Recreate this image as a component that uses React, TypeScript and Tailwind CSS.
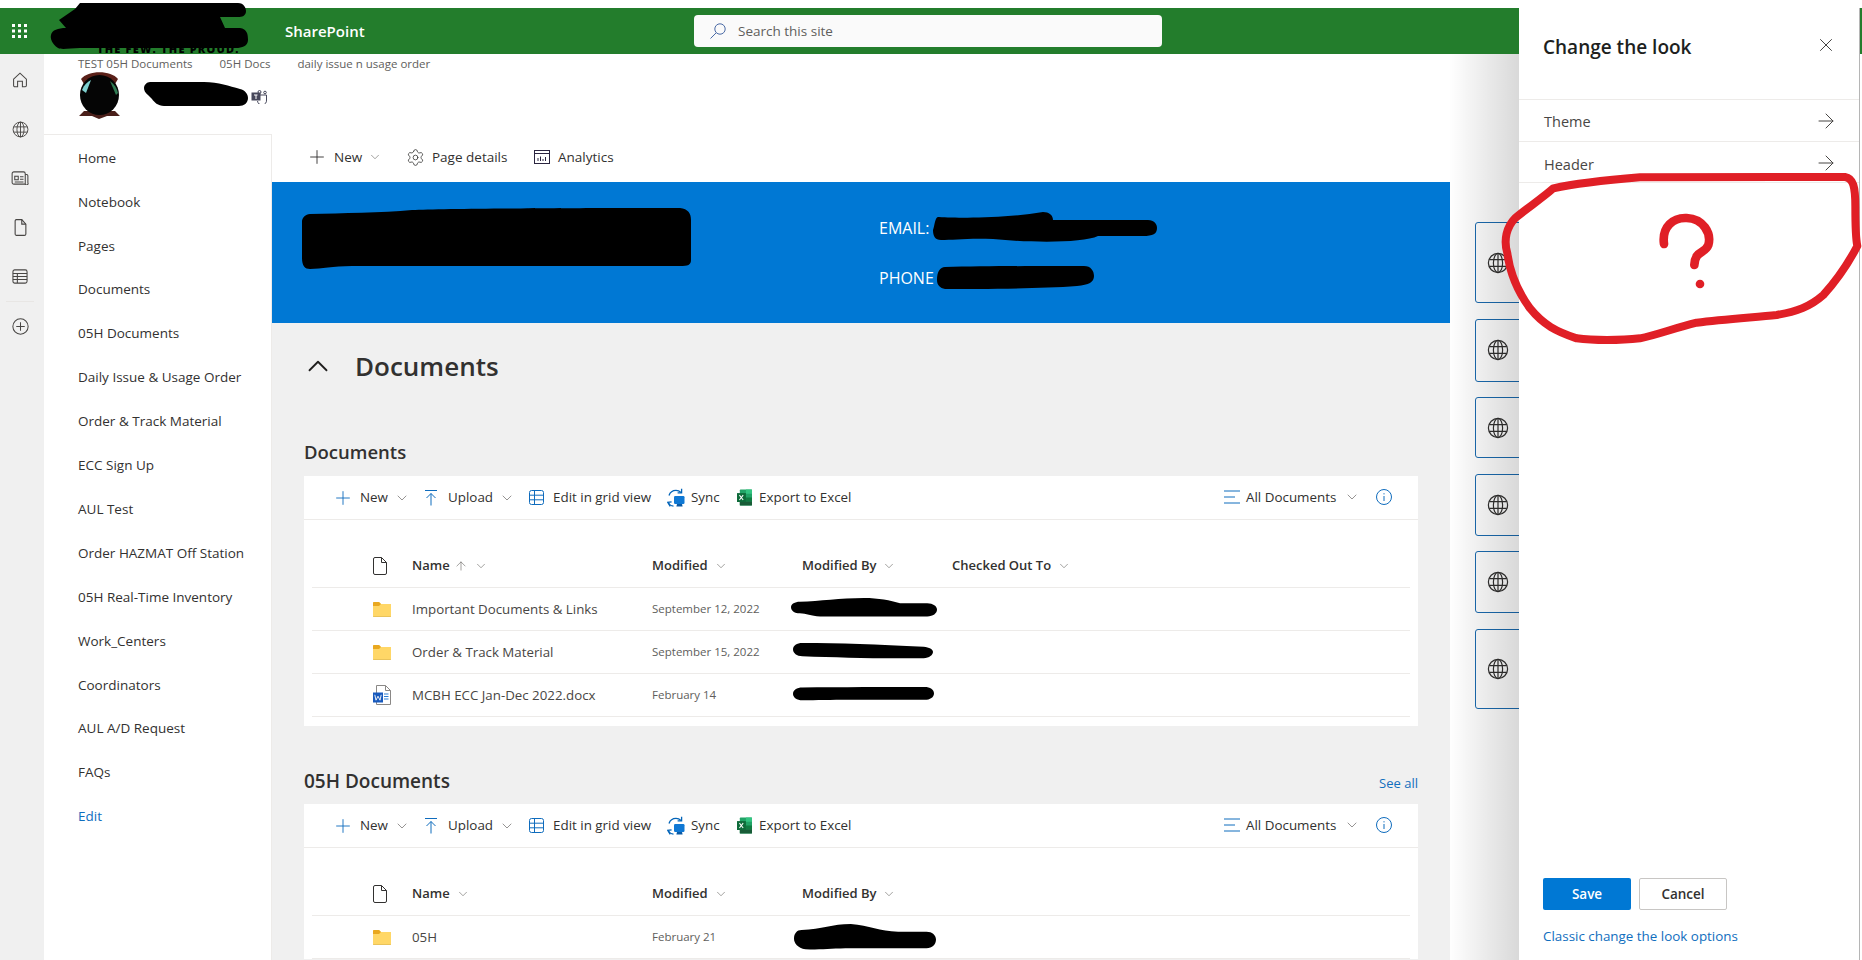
import { ArrowRight, ArrowUp, ChevronDown, ChevronUp, Plus, Settings, X } from "lucide-react";

const navItems = [
  "Home",
  "Notebook",
  "Pages",
  "Documents",
  "05H Documents",
  "Daily Issue & Usage Order",
  "Order & Track Material",
  "ECC Sign Up",
  "AUL Test",
  "Order HAZMAT Off Station",
  "05H Real-Time Inventory",
  "Work_Centers",
  "Coordinators",
  "AUL A/D Request",
  "FAQs",
];

const cardHeights = ["h-[81px]", "h-[63px]", "h-[61px]", "h-[62px]", "h-[62px]", "h-[80px]"];

function Globe({ className }: { className?: string }) {
  return (
    <svg viewBox="0 0 22 22" fill="none" stroke="currentColor" strokeWidth="1.2" className={className}>
      <circle cx="11" cy="11" r="9.6" />
      <ellipse cx="11" cy="11" rx="4.6" ry="9.6" />
      <path d="M11 1.4v19.2M2.2 7.6h17.6M2.2 14.4h17.6" />
    </svg>
  );
}

function Waffle() {
  return (
    <svg viewBox="0 0 16 14" className="h-[14px] w-[16px]" fill="white">
      {[0, 5.5, 11].map((y) =>
        [0, 6, 12].map((x) => <rect key={`${x}-${y}`} x={x} y={y} width="3" height="3" />),
      )}
    </svg>
  );
}

function Folder() {
  return (
    <svg viewBox="0 0 18 16" className="h-4 w-[18px]">
      <path d="M0 2a1 1 0 0 1 1-1h5l2 2h10v12a1 1 0 0 1-1 1H1a1 1 0 0 1-1-1z" fill="#ffd767" />
      <path d="M0 2a1 1 0 0 1 1-1h5l2 2-2 2H0z" fill="#e9a820" />
      <path d="M0 15h18v.2a.8.8 0 0 1-.8.8H.8a.8.8 0 0 1-.8-.8z" fill="#e9c35b" />
    </svg>
  );
}

function WordIcon() {
  return (
    <svg viewBox="0 0 18 20" className="h-5 w-[18px]">
      <path d="M3.5.5h9l5 5v14h-14z" fill="white" stroke="#8a8886" />
      <path d="M12.5.5v5h5" fill="none" stroke="#8a8886" />
      <path d="M11 9h4.5M11 11.5h4.5M11 14h4.5" stroke="#2b7cd3" strokeWidth="1" />
      <rect x="0" y="7.5" width="10" height="10" fill="#185abd" />
      <path d="M1.8 9.8l1.2 5.4 2-4 2 4 1.2-5.4" fill="none" stroke="white" strokeWidth="0.9" />
    </svg>
  );
}

function ExcelIcon() {
  return (
    <svg viewBox="0 0 16 17" className="h-[17px] w-[15px]">
      <rect x="3" y="0" width="13" height="17" rx="0.8" fill="#21a366" />
      <rect x="9.5" y="0" width="6.5" height="4.5" fill="#33c481" />
      <rect x="9.5" y="8.5" width="6.5" height="4.2" fill="#107c41" />
      <rect x="3" y="12.7" width="13" height="4.3" fill="#185c37" />
      <rect x="0" y="3.8" width="9.5" height="9.5" fill="#0e6b3a" />
      <path d="M2.6 6l4 5.2M6.6 6l-4 5.2" stroke="white" strokeWidth="1.1" />
    </svg>
  );
}

function SyncIcon() {
  return (
    <svg viewBox="0 0 18 20" className="h-5 w-[18px]" fill="none">
      <path d="M2 7.5C3.2 4 6 2.4 9 2.4c2.2 0 3.6.7 5 2" stroke="#0364b8" strokeWidth="1.3" />
      <path d="M14.6.8v4h-4" stroke="#0364b8" strokeWidth="1.3" />
      <path d="M1 14.5c1.2 2.2 3 3.4 5.5 3.6" stroke="#0364b8" strokeWidth="1.3" />
      <path d="M3.2 18.4l-2.4-4 3.8-.6" stroke="#0364b8" strokeWidth="1.3" />
      <rect x="7" y="8" width="10.5" height="8" rx="1.2" fill="#0f78d4" />
      <path d="M10 16h5l.6 2.4h-6.200z" fill="#0a5aa5" />
    </svg>
  );
}

function GridIcon() {
  return (
    <svg viewBox="0 0 15 15" fill="none" stroke="#0f6cbd" strokeWidth="1" className="h-[15px] w-[15px]">
      <rect x="0.500" y="0.500" width="14" height="14" rx="2" />
      <path d="M0.500 5.200h14M0.500 9.800h14M5.500 0.500v14" />
    </svg>
  );
}

function UploadIcon() {
  return (
    <svg viewBox="0 0 12 16" fill="none" stroke="#0f6cbd" strokeWidth="1" className="h-4 w-3">
      <path d="M0 .5h12M6 15.500V3.500M1.500 8L6 3.500 10.500 8" />
    </svg>
  );
}

function ListCommands() {
  return (
    <div className="flex h-[44px] shrink-0 items-center border-b border-[#edebe9] text-[13.400px] text-[#323130]">
      <Plus size={22} strokeWidth={1} className="ml-[28px] text-[#0f6cbd]" />
      <span className="ml-[6px] w-[34px]">New</span>
      <ChevronDown size={16} strokeWidth={1} className="text-[#605e5c]" />
      <span className="ml-[15px]">
        <UploadIcon />
      </span>
      <span className="ml-[11px] w-[51px]">Upload</span>
      <ChevronDown size={16} strokeWidth={1} className="text-[#605e5c]" />
      <span className="ml-[14px]">
        <GridIcon />
      </span>
      <span className="ml-[9px] w-[114px]">Edit in grid view</span>
      <SyncIcon />
      <span className="ml-[6px] w-[46px]">Sync</span>
      <ExcelIcon />
      <span className="ml-[7px]">Export to Excel</span>
      <div className="ml-auto flex items-center pr-[26px]">
        <svg viewBox="0 0 16 14" fill="none" stroke="#0f6cbd" className="h-[14px] w-4">
          <path d="M0 1h16M0 7h11M0 13h16" />
        </svg>
        <span className="ml-[6px] w-[98px]">All Documents</span>
        <ChevronDown size={16} strokeWidth={1} className="text-[#605e5c]" />
        <svg viewBox="0 0 16 16" fill="none" stroke="#0f6cbd" className="ml-[16px] h-4 w-4">
          <circle cx="8" cy="8" r="7.500" />
          <path d="M8 7v5M8 4.200v1.200" />
        </svg>
      </div>
    </div>
  );
}

function HeaderCell({ label, className, sorted }: { label: string; className: string; sorted?: boolean }) {
  return (
    <div className={`flex items-center ${className}`}>
      <span>{label}</span>
      {sorted && <ArrowUp size={14} strokeWidth={1} className="ml-[4px] text-[#605e5c]" />}
      <ChevronDown size={14} strokeWidth={1} className="ml-[6px] text-[#605e5c]" />
    </div>
  );
}

function ListHeader({ sorted, checkedOut }: { sorted?: boolean; checkedOut?: boolean }) {
  return (
    <div className="mx-2 mt-[24px] flex h-[44px] shrink-0 items-center border-b border-[#edebe9] text-[13px] font-semibold text-[#323130]">
      <svg viewBox="0 0 14 18" fill="none" stroke="#323130" className="ml-[61px] mr-[25px] h-[18px] w-[14px]">
        <path d="M2 .5h6.500L13.500 5.500V16a1.500 1.500 0 0 1-1.500 1.500H2A1.500 1.500 0 0 1 .5 16V2A1.500 1.500 0 0 1 2 .5z" />
        <path d="M8.500.5v5h5" />
      </svg>
      <HeaderCell label="Name" sorted={sorted} className="w-[240px]" />
      <HeaderCell label="Modified" className="w-[150px]" />
      <HeaderCell label="Modified By" className="w-[150px]" />
      {checkedOut && <HeaderCell label="Checked Out To" className="w-[150px]" />}
    </div>
  );
}

function FileRow({
  name,
  date,
  word,
  scribble,
}: {
  name: string;
  date: string;
  word?: boolean;
  scribble: { width: string; height: string; d: string; offset: string };
}) {
  return (
    <div className="mx-2 flex h-[43px] shrink-0 items-center border-b border-[#edebe9] text-[13.300px] text-[#484644]">
      <div className="ml-[61px] w-[39px]">{word ? <WordIcon /> : <Folder />}</div>
      <div className="w-[240px] pt-[1px]">{name}</div>
      <div className="w-[150px] pb-[1px] text-[11.500px] text-[#605e5c]">{date}</div>
      <svg viewBox="0 0 150 30" preserveAspectRatio="none" className={`${scribble.width} ${scribble.height} ${scribble.offset}`}>
        <path d={scribble.d} fill="black" />
      </svg>
    </div>
  );
}

const scribbleA = "M9 5C30 4 50 0 75 0 90 0 102 3 112 7H140C146 7 150 11 150 15 150 20 146 24 140 24H30C20 24 16 20 9 20 4 20 0 17 0 12 0 8 4 5 9 5z";
const scribbleB = "M10 0C50 0 90 2 140 6 146 7 150 10 150 14 150 19 146 24 140 24 90 25 50 23 10 21 4 21 0 16 0 10 0 4 4 0 10 0z";
const scribbleC = "M10 1C50 0 100 0 140 0 146 0 150 5 150 12 150 19 146 24 140 24H60C40 24 25 25 10 25 4 25 0 19 0 13 0 6 4 1 10 1z";
const scribbleD = "M8 7C30 6 40 0 60 0 80 2 90 8 110 9H140C146 9 150 13 150 18 150 24 146 28 140 28H60C40 28 30 30 12 29 4 28 0 22 0 17 0 11 3 7 8 7z";

function App() {
  return (
    <div className="relative h-[960px] w-[1862px] overflow-hidden bg-white font-['Open_Sans',sans-serif]">
      <div className="h-2" />

      {/* suite bar */}
      <div className="relative flex h-[46px] items-center overflow-hidden bg-[#237d2c]">
        <div className="ml-[12px]">
          <Waffle />
        </div>
        <span className="ml-[257px] w-[78px] whitespace-nowrap text-[15px] font-semibold text-white">SharePoint</span>
        <div className="ml-[331px] flex h-[32px] w-[468px] items-center rounded-[4px] bg-[#fafafa] pl-[16px]">
          <svg viewBox="0 0 16 16" fill="none" stroke="#4a6aa5" className="h-4 w-4">
            <circle cx="10" cy="6" r="5.200" />
            <path d="M6.200 9.800L.5 15.500" />
          </svg>
          <span className="ml-[12px] text-[13.500px] text-[#605e5c]">Search this site</span>
        </div>
        <span className="absolute left-[97px] top-[35px] text-[11px] font-extrabold leading-none tracking-[1.2px] text-black">
          THE FEW. THE PROUD.
        </span>
      </div>

      <div className="flex h-[906px]">
        {/* app rail */}
        <div className="flex w-[44px] shrink-0 flex-col items-center bg-[#f0f0f0] pr-[4px] pt-[1.500px] text-[#484644]">
          <div className="flex h-[49px] items-center">
            <svg viewBox="0 0 20 20" fill="none" stroke="currentColor" strokeWidth="1.300" className="h-4 w-4">
              <path d="M2 9L10 1.500 18 9V17a1.500 1.500 0 0 1-1.500 1.500h-3.500v-7h-6v7H3.500A1.500 1.500 0 0 1 2 17z" />
            </svg>
          </div>
          <div className="flex h-[49px] items-center">
            <Globe className="h-[17px] w-[17px]" />
          </div>
          <div className="flex h-[49px] items-center">
            <svg viewBox="0 0 20 16" fill="none" stroke="currentColor" strokeWidth="1.200" className="h-[14px] w-[18px]">
              <path d="M1 3a2 2 0 0 1 2-2h11a2 2 0 0 1 2 2v12H3a2 2 0 0 1-2-2z" />
              <path d="M16 4h1.500A1.500 1.500 0 0 1 19 5.500V13.500A1.500 1.500 0 0 1 16 15" />
              <rect x="4" y="6" width="4" height="4" />
              <path d="M10 6.500h4M10 9.500h4M4 12.500h10" />
            </svg>
          </div>
          <div className="flex h-[49px] items-center">
            <svg viewBox="0 0 14 20" fill="none" stroke="currentColor" strokeWidth="1.300" className="h-[17px] w-[13px]">
              <path d="M2 .7h6.500L13.300 6V17.500a1.800 1.800 0 0 1-1.800 1.800h-9.500A1.500 1.500 0 0 1 .7 18V2A1.500 1.500 0 0 1 2 .7z" />
              <path d="M8.500.7V6h4.800" />
            </svg>
          </div>
          <div className="flex h-[49px] items-center">
            <svg viewBox="0 0 18 17" fill="none" stroke="currentColor" strokeWidth="1.200" className="h-[15px] w-4">
              <rect x="1" y="1" width="16" height="15" rx="2" />
              <path d="M1 5h16M1 8.500h16M1 12h16M6 5v11" />
            </svg>
          </div>
          <div className="h-px w-[28px] bg-[#e8e6e4]" />
          <div className="flex h-[49px] items-center">
            <svg viewBox="0 0 20 20" fill="none" stroke="currentColor" strokeWidth="1.200" className="h-[17px] w-[17px]">
              <circle cx="10" cy="10" r="9" />
              <path d="M10 5v10M5 10h10" />
            </svg>
          </div>
        </div>

        <div className="flex min-w-0 flex-1 flex-col">
          {/* site header */}
          <div className="h-[80px] shrink-0 pl-[34px] pt-[2px] text-[11.500px] leading-[15px] text-[#605e5c]">
            <div className="flex">
              <span>TEST 05H Documents</span>
              <span className="ml-[27px]">05H Docs</span>
              <span className="ml-[27px]">daily issue n usage order</span>
            </div>
            <div className="flex items-center">
              <svg viewBox="0 0 43 48" className="h-[48px] w-[43px]">
                <path d="M3 8C10 -1 33 -1 40 8L37 13H6z" fill="#5a2018" />
                <path d="M6 40L1 45 14 45 21 48 29 45 42 45 37 40z" fill="#4a1f1a" />
                <ellipse cx="21.500" cy="24" rx="19.500" ry="20" fill="#050505" />
                <path d="M4 19C6 14 9 11 13 9L8 22z" fill="#7fd0cf" />
                <path d="M40 22C39 17 36 13 32 10L38 24z" fill="#2f7b52" />
              </svg>
              <svg viewBox="0 0 104 24" preserveAspectRatio="none" className="ml-[23px] mt-[-2px] h-[24px] w-[104px]">
                <path d="M6 0H60C75 0 85 4 96 7 101 8 104 12 104 16 104 21 100 24 95 24H20C14 24 10 20 8 17L4 13C1 11 0 8 0 6 0 3 3 0 6 0z" fill="black" />
              </svg>
              <svg viewBox="0 0 17 14" fill="none" className="ml-[3px] mt-[3px] h-[14px] w-[17px]">
                <rect x="0.500" y="2.500" width="9" height="8" fill="#46475a" />
                <path d="M3 5h4M5 5v4" stroke="white" strokeWidth="1" />
                <path d="M6 5h9.500v5a4 4 0 0 1-9 1" stroke="#46475a" />
                <circle cx="8.500" cy="2" r="1.500" stroke="#46475a" />
                <circle cx="14" cy="2.500" r="1.300" stroke="#46475a" />
              </svg>
            </div>
          </div>

          <div className="flex min-h-0 flex-1">
            {/* site nav */}
            <div className="w-[228px] shrink-0 border-r border-t border-[#edebe9] pl-[34px] pt-[1px] text-[13.500px] text-[#323130]">
              {navItems.map((item) => (
                <div key={item} className="flex h-[43.900px] items-center">
                  {item}
                </div>
              ))}
              <div className="flex h-[43.900px] items-center text-[#106ebe]">Edit</div>
            </div>

            <div className="flex min-w-0 flex-1 flex-col">
              {/* page commands */}
              <div className="flex h-[48px] shrink-0 items-center pb-[2px] text-[13.500px] text-[#323130]">
                <Plus size={22} strokeWidth={1} className="ml-[34px]" />
                <span className="ml-[6px] w-[34px]">New</span>
                <ChevronDown size={14} strokeWidth={1} className="text-[#605e5c]" />
                <Settings size={19} strokeWidth={1} className="ml-[24px]" />
                <span className="ml-[7px] w-[102px]">Page details</span>
                <svg viewBox="0 0 16 14" fill="none" stroke="#2b2540" className="h-[14px] w-4">
                  <rect x="0.500" y="0.500" width="15" height="13" />
                  <path d="M0.500 3.500h15M4 11V8M6.500 11V6.500M9 11V9M11.500 11V7" />
                </svg>
                <span className="ml-[8px]">Analytics</span>
              </div>

              <div className="flex min-h-0 flex-1">
                <div className="flex w-[1178px] shrink-0 flex-col">
                  {/* hero banner */}
                  <div className="flex h-[141px] shrink-0 bg-[#0078d4] pl-[30px] pt-[26px] text-[16px] text-white">
                    <svg viewBox="0 0 389 62" preserveAspectRatio="none" className="h-[62px] w-[389px]">
                      <path d="M8 6C40 5 80 5 110 2 150 0 340 0 378 0 386 1 389 5 389 12V52C389 57 386 58 378 58H50C30 58 20 61 8 61 3 61 0 58 0 50V18C-1 12 1 7 8 6z" fill="black" />
                    </svg>
                    <div className="ml-[188px] flex flex-col">
                      <div className="flex h-[39px] items-center">
                        <span className="w-[54px] shrink-0 whitespace-nowrap">EMAIL:</span>
                        <svg viewBox="0 0 224 31" preserveAspectRatio="none" className="h-[31px] w-[224px]">
                          <path d="M6 5C25 6 70 7 110 0 116 0 120 3 120 8H215C221 8 224 12 224 16 224 22 220 24 210 24H165C150 31 100 31 60 27 35 26 20 28 8 28 2 28 0 24 0 18 2 12 2 4 6 5z" fill="black" />
                        </svg>
                      </div>
                      <div className="mt-[19px] flex h-[23px] items-center">
                        <span className="w-[58px] shrink-0 whitespace-nowrap">PHONE</span>
                        <svg viewBox="0 0 157 23" preserveAspectRatio="none" className="h-[23px] w-[157px]">
                          <path d="M8 1C50 0 110 0 147 0 154 0 157 5 157 10 157 16 152 19 140 20 100 23 40 23 8 23 3 22 0 19 0 14 0 6 3 1 8 1z" fill="black" />
                        </svg>
                      </div>
                    </div>
                  </div>

                  <div className="min-h-0 flex-1 overflow-hidden bg-[#f0f0f0] px-[32px]">
                    <div className="flex h-[86px] items-center">
                      <ChevronUp size={34} strokeWidth={1.300} className="ml-[-3px] mr-[20px] text-[#201f1e]" />
                      <h1 className="text-[26px] font-semibold text-[#323130]">Documents</h1>
                    </div>

                    <h2 className="flex h-[67px] items-end pb-[10px] text-[18.500px] font-semibold text-[#323130]">Documents</h2>
                    <div className="flex h-[250px] flex-col bg-white">
                      <ListCommands />
                      <ListHeader sorted checkedOut />
                      <FileRow
                        name="Important Documents & Links"
                        date="September 12, 2022"
                        scribble={{ width: "w-[146px]", height: "h-[23px]", d: scribbleA, offset: "ml-[-11px]" }}
                      />
                      <FileRow
                        name="Order & Track Material"
                        date="September 15, 2022"
                        scribble={{ width: "w-[140px]", height: "h-[19px]", d: scribbleB, offset: "ml-[-9px]" }}
                      />
                      <FileRow
                        name="MCBH ECC Jan-Dec 2022.docx"
                        date="February 14"
                        word
                        scribble={{ width: "w-[141px]", height: "h-[16px]", d: scribbleC, offset: "ml-[-9px]" }}
                      />
                    </div>

                    <div className="flex h-[78px] items-end justify-between pb-[9px]">
                      <h2 className="text-[19px] font-semibold text-[#323130]">05H Documents</h2>
                      <span className="pb-[2px] text-[13px] text-[#106ebe]">See all</span>
                    </div>
                    <div className="flex flex-col bg-white">
                      <ListCommands />
                      <ListHeader />
                      <FileRow
                        name="05H"
                        date="February 21"
                        scribble={{ width: "w-[142px]", height: "h-[26px]", d: scribbleD, offset: "ml-[-8px]" }}
                      />
                    </div>
                  </div>
                </div>

                {/* quick links column, runs on under the panel */}
                <div className="flex flex-1 flex-col gap-[15.500px] pl-[25px] pt-[40px]">
                  {cardHeights.map((h, i) => (
                    <div
                      key={i}
                      className={`flex w-[120px] items-center rounded-[3px] border border-[#1a6bb0] pl-[11px] text-[#323130] ${h}`}
                    >
                      <Globe className="h-[22px] w-[22px]" />
                    </div>
                  ))}
                </div>
              </div>
            </div>
          </div>
        </div>
      </div>

      {/* change the look panel */}
      <div className="absolute bottom-0 left-[1519px] top-2 flex w-[341px] flex-col border-r border-[#b5b5b5] bg-white">
        <div className="absolute bottom-0 left-[-70px] top-[46px] w-[70px] bg-linear-to-r from-transparent to-black/15" />
        <div className="flex h-[92px] shrink-0 items-start justify-between border-b border-[#edebe9] pl-[24px] pr-[22px] pt-[25px]">
          <span className="text-[19px] font-semibold text-[#201f1e]">Change the look</span>
          <X size={22} strokeWidth={1} className="mt-[1px] text-[#323130]" />
        </div>
        <div className="flex h-[42px] shrink-0 items-center justify-between border-b border-[#edebe9] pl-[25px] pr-[21px] text-[14.500px] text-[#484644]">
          <span className="pt-[3px]">Theme</span>
          <ArrowRight size={24} strokeWidth={1} />
        </div>
        <div className="flex h-[41px] shrink-0 items-center justify-between border-b border-[#edebe9] pl-[25px] pr-[21px] text-[14.500px] text-[#484644]">
          <span className="pt-[5px]">Header</span>
          <ArrowRight size={24} strokeWidth={1} className="mt-[2px]" />
        </div>
        <div className="flex-1" />
        <div className="flex gap-2 pl-[24px]">
          <button className="h-[32px] w-[88px] rounded-[2px] bg-[#0078d4] text-[13.500px] font-semibold text-white">Save</button>
          <button className="h-[32px] w-[88px] rounded-[2px] border border-[#c8c6c4] bg-white text-[13.500px] font-semibold text-[#323130]">
            Cancel
          </button>
        </div>
        <a className="mb-[14px] ml-[24px] mt-[16px] text-[13.400px] text-[#106ebe]">Classic change the look options</a>
      </div>

      {/* marker redaction over the suite bar */}
      <svg viewBox="0 0 210 50" className="absolute left-[50px] top-0 h-[50px] w-[210px]">
        <path d="M30 3H188C194 3 196 8 196 11 196 16 192 17 188 17H170L175 28H190C197 29 198 34 198 40 198 46 192 48 186 48H30C20 48 12 50 8 48 2 44 0 38 1 35 2 30 8 28 16 28L9 20 25 9z" fill="black" />
      </svg>

      {/* red marker question */}
      <svg viewBox="0 0 1386 1080" fill="none" stroke="#e01f26" className="absolute left-[1400px] top-0 h-[360px] w-[462px]">
        <path
          d="M720 532C880 530 1120 531 1335 531C1360 535 1366 560 1366 620C1366 680 1366 710 1372 738C1350 780 1320 830 1270 885C1230 920 1190 935 1130 945C1060 952 970 958 890 968C820 985 770 1005 720 1015C660 1022 580 1022 530 1015C470 995 430 975 390 925C350 870 330 820 322 760C310 720 320 680 345 655C380 625 420 600 460 565C520 552 600 542 720 532z"
          strokeWidth="24"
          strokeLinejoin="round"
        />
        <path
          d="M792 732C785 680 820 652 860 654 910 656 935 700 925 735 915 762 885 750 883 795"
          strokeWidth="26"
          strokeLinecap="round"
        />
        <circle cx="900" cy="852" r="13" fill="#e01f26" stroke="none" />
      </svg>
    </div>
  );
}

export default App;
